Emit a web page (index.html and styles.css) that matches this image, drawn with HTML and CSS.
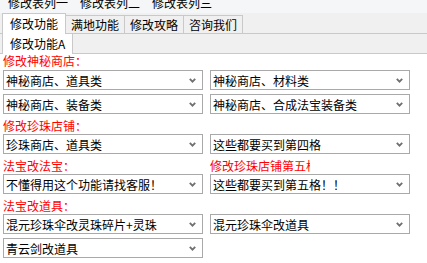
FILE: index.html
```html
<!DOCTYPE html>
<html lang="zh-CN">
<head>
    <meta charset="UTF-8">
    <title>修改功能</title>
    <link rel="stylesheet" href="styles.css">
</head>
<body>
    <div class="menubar">
        <span class="menu-item">修改表列一</span>
        <span class="menu-item">修改表列二</span>
        <span class="menu-item">修改表列三</span>
    </div>

    <div class="tabs">
        <div class="tab active">修改功能</div>
        <div class="tab">满地功能</div>
        <div class="tab">修改攻略</div>
        <div class="tab">咨询我们</div>
    </div>

    <div class="subtabs">
        <div class="subtab active">修改功能A</div>
    </div>

    <div class="panel">
        <div class="row label-row first">
            <p class="label">修改神秘商店：</p>
        </div>
        <div class="row">
            <div class="combo"><span>神秘商店、道具类</span><svg class="arrow" viewBox="0 0 7 5"><polyline points="0.8,0.8 3.5,3.6 6.2,0.8"/></svg></div>
            <div class="combo"><span>神秘商店、材料类</span><svg class="arrow" viewBox="0 0 7 5"><polyline points="0.8,0.8 3.5,3.6 6.2,0.8"/></svg></div>
        </div>
        <div class="row">
            <div class="combo"><span>神秘商店、装备类</span><svg class="arrow" viewBox="0 0 7 5"><polyline points="0.8,0.8 3.5,3.6 6.2,0.8"/></svg></div>
            <div class="combo"><span>神秘商店、合成法宝装备类</span><svg class="arrow" viewBox="0 0 7 5"><polyline points="0.8,0.8 3.5,3.6 6.2,0.8"/></svg></div>
        </div>

        <div class="row label-row">
            <p class="label">修改珍珠店铺：</p>
        </div>
        <div class="row">
            <div class="combo"><span>珍珠商店、道具类</span><svg class="arrow" viewBox="0 0 7 5"><polyline points="0.8,0.8 3.5,3.6 6.2,0.8"/></svg></div>
            <div class="combo"><span>这些都要买到第四格</span><svg class="arrow" viewBox="0 0 7 5"><polyline points="0.8,0.8 3.5,3.6 6.2,0.8"/></svg></div>
        </div>

        <div class="row label-row">
            <p class="label">法宝改法宝：</p>
            <p class="label clipped">修改珍珠店铺第五格</p>
        </div>
        <div class="row">
            <div class="combo"><span>不懂得用这个功能请找客服！</span><svg class="arrow" viewBox="0 0 7 5"><polyline points="0.8,0.8 3.5,3.6 6.2,0.8"/></svg></div>
            <div class="combo"><span>这些都要买到第五格！！</span><svg class="arrow" viewBox="0 0 7 5"><polyline points="0.8,0.8 3.5,3.6 6.2,0.8"/></svg></div>
        </div>

        <div class="row label-row">
            <p class="label">法宝改道具：</p>
        </div>
        <div class="row">
            <div class="combo"><span>混元珍珠伞改灵珠碎片+灵珠</span><svg class="arrow" viewBox="0 0 7 5"><polyline points="0.8,0.8 3.5,3.6 6.2,0.8"/></svg></div>
            <div class="combo"><span>混元珍珠伞改道具</span><svg class="arrow" viewBox="0 0 7 5"><polyline points="0.8,0.8 3.5,3.6 6.2,0.8"/></svg></div>
        </div>
        <div class="row">
            <div class="combo"><span>青云剑改道具</span><svg class="arrow" viewBox="0 0 7 5"><polyline points="0.8,0.8 3.5,3.6 6.2,0.8"/></svg></div>
        </div>
    </div>
</body>
</html>
```

FILE: styles.css
```css
body {
    margin: 0;
    background: #ffffff;
    font-family: "Noto Sans CJK SC", "DejaVu Sans", sans-serif;
    font-size: 12px;
    color: #000000;
    overflow: hidden;
}
p {
    margin: 0;
}
.menubar {
    height: 13px;
    padding-left: 2px;
    background: #f5f6f7;
    display: flex;
    overflow: hidden;
}
.menu-item {
    padding: 0 6px;
    line-height: 12px;
    margin-top: -3px;
}
.tabs {
    height: 20px;
    padding-left: 2px;
    background: #f0f0f0;
    border-bottom: 1px solid #c9c9c9;
    display: flex;
    align-items: flex-end;
}
.tab {
    height: 17px;
    line-height: 17px;
    padding: 0 5px;
    border: 1px solid #c9c9c9;
    border-bottom: none;
    background: #f0f0f0;
}
.tab + .tab {
    margin-left: -1px;
}
.tab.active {
    height: 20px;
    line-height: 20px;
    padding: 0 7px;
    background: #ffffff;
    margin-bottom: -1px;
    position: relative;
    z-index: 1;
}
.subtabs {
    height: 19px;
    padding-left: 2px;
    background: #f0f0f0;
    border-bottom: 1px solid #c9c9c9;
    display: flex;
}
.subtab {
    height: 20px;
    line-height: 19px;
    padding: 0 7px;
    border-left: 1px solid #c9c9c9;
    border-right: 1px solid #c9c9c9;
    background: #ffffff;
}
.panel {
    padding-left: 3px;
}
.row {
    display: grid;
    grid-template-columns: 200px 200px;
    column-gap: 7px;
}
.row + .row {
    margin-top: 4px;
}
.label-row {
    height: 20px;
    align-items: end;
}
.row + .label-row {
    margin-top: 0;
}
.label-row + .row {
    margin-top: 0;
}
.label-row.first {
    height: 16px;
    align-items: start;
}
.label {
    color: #ff0000;
    line-height: 16px;
    white-space: nowrap;
}
.first .label {
    line-height: 14px;
}
.label.clipped {
    width: 100px;
    overflow: hidden;
}
.combo {
    height: 18px;
    border: 1px solid #a9a9a9;
    background: #ffffff;
    display: flex;
    align-items: center;
    justify-content: space-between;
    padding: 0 6px 0 2px;
    white-space: nowrap;
}
.arrow {
    width: 7px;
    height: 5px;
    fill: none;
    stroke: #707070;
    stroke-width: 1.8;
}
```
